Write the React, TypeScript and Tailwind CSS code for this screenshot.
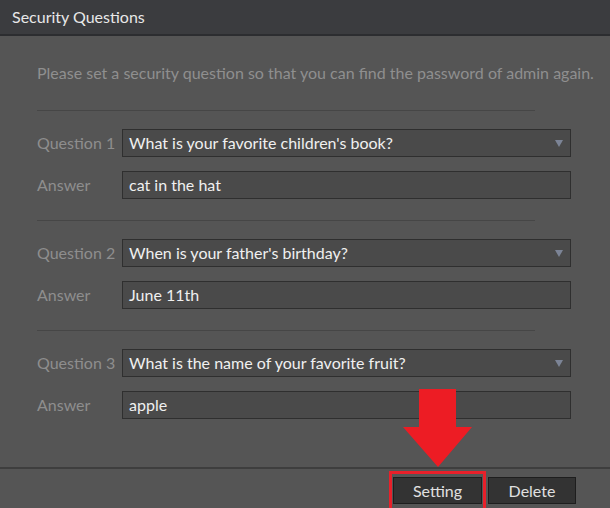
const questions = [
  { label: "Question 1", q: "What is your favorite children's book?", a: "cat in the hat" },
  { label: "Question 2", q: "When is your father's birthday?", a: "June 11th" },
  { label: "Question 3", q: "What is the name of your favorite fruit?", a: "apple" },
]

const font = { fontFamily: "Lato, 'Noto Sans', sans-serif" }

const QuestionBlock = ({ label, q, a, last }: { label: string; q: string; a: string; last?: boolean }) => {
  return (
    <div className={`flex flex-col ${last ? "" : "pb-[21px]"}`}>
      <div className="w-[498px] border-t border-[#464646]"></div>
      <div className="flex items-center mt-[18px]">
        <span className="w-[85px] text-[16px] text-[#8e8e8e]">{label}</span>
        <div className="flex items-center justify-between w-[449px] h-[28px] bg-[#4a4a4a] border border-[#2f2f2f] pl-[6px] pr-[7px]">
          <span className="text-[16px] text-[#f0f0f0]">{q}</span>
          <span className="w-0 h-0 border-l-[4px] border-r-[4px] border-t-[7px] border-l-transparent border-r-transparent border-t-[#7c8496]"></span>
        </div>
      </div>
      <div className="flex items-center mt-[14px]">
        <span className="w-[85px] text-[16px] text-[#8e8e8e]">Answer</span>
        <div className="flex items-center w-[449px] h-[28px] bg-[#4a4a4a] border border-[#2f2f2f] pl-[6px]">
          <span className="text-[16px] text-[#f0f0f0]">{a}</span>
        </div>
      </div>
    </div>
  )
}

export default function App() {
  return (
    <div className="relative w-[610px] h-[508px] bg-[#555555] overflow-hidden flex flex-col" style={font}>
      <div className="h-[36px] bg-[#3b3c3f] border-b-2 border-[#2c2d30] flex items-center px-[12px]">
        <h3 className="text-[16px] text-[#e8e8e8]">Security Questions</h3>
      </div>

      <div className="flex-1 pl-[37px] pt-[27px]">
        <p className="text-[16px] text-[#8f8f8f] leading-[20px] mb-[27px]">
          Please set a security question so that you can find the password of admin again.
        </p>
        {questions.map((item, i) => (
          <QuestionBlock key={item.label} {...item} last={i === questions.length - 1} />
        ))}
      </div>

      {/* footer */}
      <div className="h-[41px] border-t-2 border-[#3e3e3e] flex items-start pt-[8px] pl-[393px] gap-[6px]">
        <button className="w-[89px] h-[27px] bg-[#333333] border border-[#1e1e1e] text-[16px] text-[#e0e0e0]">Setting</button>
        <button className="w-[88px] h-[27px] bg-[#333333] border border-[#1e1e1e] text-[16px] text-[#e0e0e0]">Delete</button>
      </div>

      {/* red highlight */}
      <div className="absolute left-[389px] top-[471px] w-[97px] h-[40px] border-[3px] border-[#e8202a]"></div>
      <svg className="absolute left-0 top-0" width="610" height="508">
        <polygon points="419,389 456,389 456,427 472,427 438,467 403,427 419,427" fill="#ed1c24" />
      </svg>
    </div>
  )
}
